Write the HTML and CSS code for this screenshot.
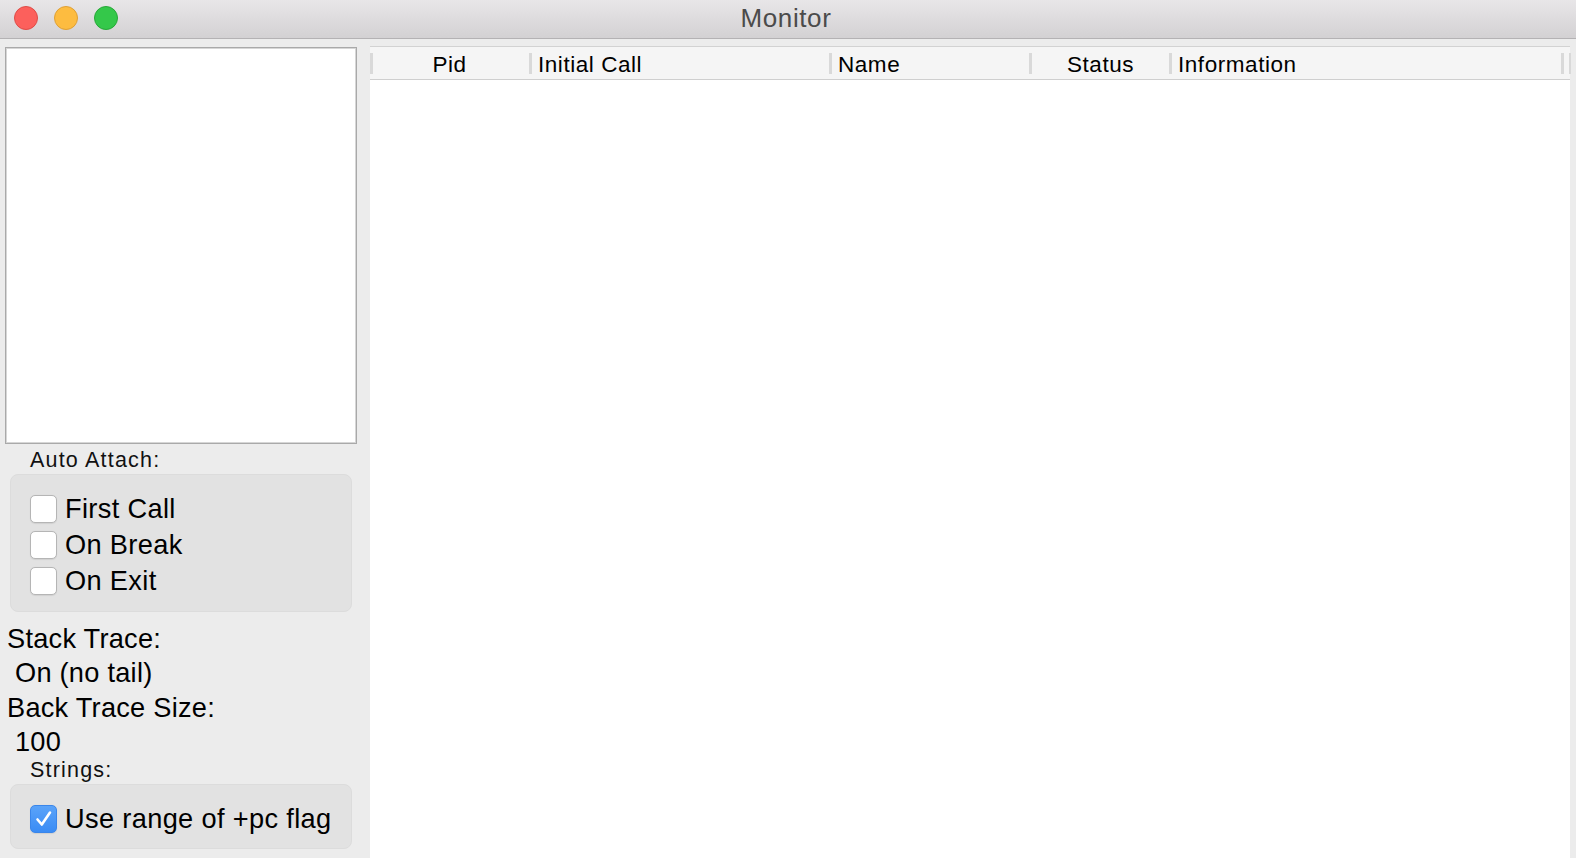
FILE: index.html
```html
<!DOCTYPE html>
<html>
<head>
<meta charset="utf-8">
<title>Monitor</title>
<link rel="stylesheet" href="styles.css">
</head>
<body>
<div class="window">
  <div class="titlebar">
    <div class="lights">
      <span class="light red"></span>
      <span class="light yellow"></span>
      <span class="light green"></span>
    </div>
    <div class="title">Monitor</div>
  </div>
  <div class="main">
    <div class="side">
      <div class="listbox"></div>
      <div class="label">Auto Attach:</div>
      <div class="group group-attach">
        <div class="row"><span class="check"></span><span class="rowtext">First Call</span></div>
        <div class="row"><span class="check"></span><span class="rowtext">On Break</span></div>
        <div class="row"><span class="check"></span><span class="rowtext">On Exit</span></div>
      </div>
      <div class="info">
        <div class="info-line first">Stack Trace:</div>
        <div class="info-line value">On (no tail)</div>
        <div class="info-line">Back Trace Size:</div>
        <div class="info-line value short">100</div>
      </div>
      <div class="label label-strings">Strings:</div>
      <div class="group group-strings">
        <div class="row">
          <span class="check checked">
            <svg width="27" height="28" viewBox="0 0 27 28"><path d="M7.5 14.5 L11.8 19.5 L20 7.5" fill="none" stroke="#fff" stroke-width="2.6" stroke-linecap="round" stroke-linejoin="round"/></svg>
          </span>
          <span class="rowtext">Use range of +pc flag</span>
        </div>
      </div>
    </div>
    <div class="table">
      <div class="thead">
        <span class="sep"></span>
        <span class="th col-pid center">Pid</span>
        <span class="sep"></span>
        <span class="th col-call">Initial Call</span>
        <span class="sep"></span>
        <span class="th col-name">Name</span>
        <span class="sep"></span>
        <span class="th col-status center">Status</span>
        <span class="sep"></span>
        <span class="th col-info">Information</span>
        <span class="sep"></span>
        <span class="th col-tail"></span>
        <span class="sep thin"></span>
      </div>
      <div class="tbody"></div>
    </div>
  </div>
</div>
</body>
</html>
```

FILE: styles.css
```css
html, body {
  margin: 0;
  padding: 0;
}
body {
  width: 1576px;
  height: 858px;
  overflow: hidden;
  background: #ececec;
  font-family: "Liberation Sans", Arial, sans-serif;
  color: #000;
}
.window {
  width: 1576px;
  height: 858px;
  display: flex;
  flex-direction: column;
}
.titlebar {
  height: 38px;
  border-bottom: 1px solid #b4b2b4;
  background: linear-gradient(#e8e6e8, #d3d1d3);
  display: flex;
  align-items: center;
  position: relative;
  flex: none;
}
.lights {
  display: flex;
  gap: 16px;
  padding-left: 14px;
  margin-top: -2px;
}
.light {
  width: 24px;
  height: 24px;
  border-radius: 50%;
  box-sizing: border-box;
}
.red { background: #fc605c; border: 1px solid #df4c47; }
.yellow { background: #fdbc40; border: 1px solid #dfa035; }
.green { background: #34c84a; border: 1px solid #27a838; }
.title {
  position: absolute;
  left: 0;
  right: 0;
  top: 0;
  text-align: center;
  font-size: 26px;
  line-height: 37px;
  letter-spacing: 0.6px;
  color: #4b4b4b;
  padding-right: 4px;
}
.main {
  flex: 1;
  display: flex;
  align-items: flex-start;
  padding-top: 7px;
}
.side {
  width: 352px;
  margin-left: 5px;
  margin-top: 1px;
  display: flex;
  flex-direction: column;
}
.listbox {
  height: 397px;
  background: #fff;
  border: 1px solid #a9a9a9;
  box-shadow: inset 0 0 0 1px #d6d6d6;
  box-sizing: border-box;
}
.label {
  font-size: 21.5px;
  line-height: 24px;
  letter-spacing: 1.2px;
  padding-left: 25px;
  margin-top: 4px;
  color: #111;
}
.label-strings {
  margin-top: 0;
}
.group {
  margin-left: 5px;
  width: 342px;
  box-sizing: border-box;
  background: #e2e2e2;
  border: 1px solid #dcdcdc;
  border-radius: 8px;
  padding-left: 19px;
  margin-top: 2px;
}
.group-attach {
  height: 138px;
  padding-top: 16px;
}
.group-strings {
  height: 65px;
  padding-top: 16px;
}
.row {
  height: 36px;
  display: flex;
  align-items: center;
  gap: 8px;
}
.check {
  width: 27px;
  height: 28px;
  box-sizing: border-box;
  border: 1px solid #b5b5b5;
  border-radius: 5px;
  background: #fff;
  box-shadow: 0 0.5px 1px rgba(0,0,0,0.08);
  flex: none;
  display: flex;
}
.check.checked {
  border: 1px solid #3a86ea;
  background: linear-gradient(#5aa3f9, #3a8cf5);
}
.check svg {
  margin: -1px;
}
.rowtext {
  font-size: 27.2px;
  line-height: 36px;
  letter-spacing: 0.35px;
  color: #000;
}
.info {
  margin-top: 9px;
  padding-left: 2px;
  font-size: 27.2px;
  letter-spacing: 0.25px;
}
.info-line {
  line-height: 35px;
  height: 35px;
}
.info-line.first {
  line-height: 36px;
  height: 34px;
}
.info-line.value {
  padding-left: 8px;
}
.info-line.short {
  line-height: 33px;
  height: 33px;
}
.table {
  margin-left: 13px;
  width: 1200px;
  height: 812px;
  background: #fff;
  display: flex;
  flex-direction: column;
}
.thead {
  height: 32px;
  border-top: 1px solid #d2d2d2;
  border-bottom: 1px solid #cfcfcf;
  background: #f5f5f5;
  display: flex;
  align-items: center;
  flex: none;
}
.sep {
  width: 3px;
  height: 21px;
  background: #d9d9d9;
  flex: none;
}
.sep.thin {
  width: 2px;
}
.th {
  font-size: 22.5px;
  line-height: 29px;
  padding-top: 3px;
  height: 32px;
  box-sizing: border-box;
  padding-left: 6px;
  letter-spacing: 0.55px;
  white-space: nowrap;
  color: #000;
  flex: none;
}
.th.center {
  text-align: center;
  padding-left: 0;
}
.col-pid { width: 156px; padding-right: 3px; }
.col-call { width: 297px; }
.col-name { width: 197px; }
.col-status { width: 137px; }
.col-info { width: 389px; }
.col-tail { width: 5px; padding-left: 0; }
.tbody {
  flex: 1;
}
```
